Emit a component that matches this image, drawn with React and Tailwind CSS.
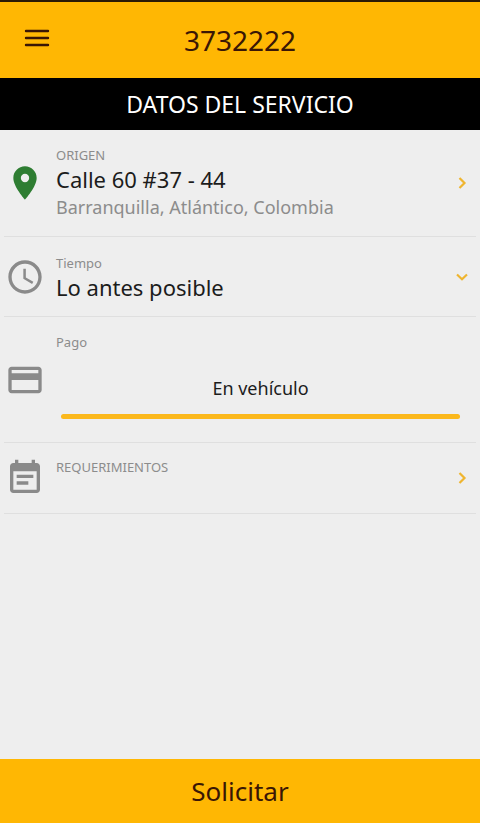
import React, { useState } from 'react';
import { MdAccessTime, MdCreditCard, MdPlace } from 'react-icons/md';

function Chevron({ down }) {
  return (
    <svg className="w-3 h-3 shrink-0" viewBox="0 0 12 12" fill="none" stroke="#efb52f" strokeWidth="2.2" aria-hidden="true">
      <path d={down ? 'M1 3.5 L6 8.2 L11 3.5' : 'M3.5 1 L8.5 6 L3.5 11'} />
    </svg>
  );
}

function NoteIcon(props) {
  return (
    <svg viewBox="0 0 24 24" fill="currentColor" {...props}>
      <path d="M17 10H7v2h10v-2zm2-7h-1V1h-2v2H8V1H6v2H5c-1.1 0-2 .9-2 2v14c0 1.1.9 2 2 2h14c1.1 0 2-.9 2-2V5c0-1.100-.9-2-2-2zm0 16H5V8h14v11zm-5-5H7v2h7v-2z" />
    </svg>
  );
}

function Row({ icon: Icon, iconColor = 'text-[#8a8a8a]', className, children }) {
  return (
    <li className="px-1">
      <div className={`flex items-center border-b border-[#dfdfdf] ${className}`}>
        <Icon className={`w-10 h-10 ml-px mr-[11px] shrink-0 ${iconColor}`} aria-hidden="true" />
        {children}
      </div>
    </li>
  );
}

export default function App() {
  const [tiempo, setTiempo] = useState('asap');

  return (
    <div className="min-h-screen flex flex-col bg-[#eeeeee] font-['Noto_Sans',sans-serif] text-[#1c1c1c]">
      <header className="bg-[#ffb703] border-t-2 border-[#2b1a05] h-[78px] grid grid-cols-[1fr_auto_1fr] items-center text-[#3a1605]">
        <button className="ml-6 w-7 h-7 -mt-1" aria-label="Menú">
          <svg className="w-[26px] h-5" viewBox="0 0 26 20" stroke="currentColor" strokeWidth="2.4" strokeLinecap="round" aria-hidden="true">
            <path d="M2 3H24M2 10H24M2 17H24" />
          </svg>
        </button>
        <h1 className="text-[28px] leading-9">3732222</h1>
      </header>
      <h2 className="bg-black text-white text-[23px] leading-8 h-[52px] flex items-center justify-center">DATOS DEL SERVICIO</h2>

      <main className="grow">
        <ul>
          <Row icon={MdPlace} iconColor="text-[#2e7d32]" className="h-[107px]">
            <button className="grow flex items-center justify-between pr-2 text-left">
              <span className="flex flex-col">
                <span className="text-[13px] leading-5 text-[#8c8c8c]">ORIGEN</span>
                <span className="text-[22px] leading-7">Calle 60 #37 - 44</span>
                <span className="text-lg leading-7 text-[#8c8c8c]">Barranquilla, Atlántico, Colombia</span>
              </span>
              <Chevron />
            </button>
          </Row>

          <Row icon={MdAccessTime} className="h-20">
            <div className="grow flex items-center justify-between pr-2">
              <div className="grow flex flex-col">
                <label htmlFor="tiempo" className="text-[13px] leading-5 text-[#8c8c8c]">Tiempo</label>
                <select id="tiempo" value={tiempo} onChange={(e) => setTiempo(e.target.value)} className="appearance-none w-full bg-transparent text-[22px] leading-7">
                  <option value="asap">Lo antes posible</option>
                </select>
              </div>
              <Chevron down />
            </div>
          </Row>

          <Row icon={MdCreditCard} className="h-[126px]">
            <div className="grow self-stretch flex flex-col pt-[15px]">
              <h3 className="text-[13px] leading-5 text-[#8c8c8c]">Pago</h3>
              <button className="mt-[18px] ml-[5px] mr-4 flex flex-col text-lg leading-7">
                <span className="self-center pt-1 pb-3">En vehículo</span>
                <span className="self-stretch h-[5px] rounded-sm bg-[#fbb81c]" />
              </button>
            </div>
          </Row>

          <Row icon={NoteIcon} className="h-[71px]">
            <button className="grow self-stretch flex items-center justify-between pr-2 text-left">
              <span className="self-start mt-[14px] text-[13px] leading-5 text-[#8c8c8c]">REQUERIMIENTOS</span>
              <Chevron />
            </button>
          </Row>
        </ul>
      </main>

      <button className="bg-[#ffb703] h-16 text-[26px] leading-9 text-[#3a1605]">Solicitar</button>
    </div>
  );
}
